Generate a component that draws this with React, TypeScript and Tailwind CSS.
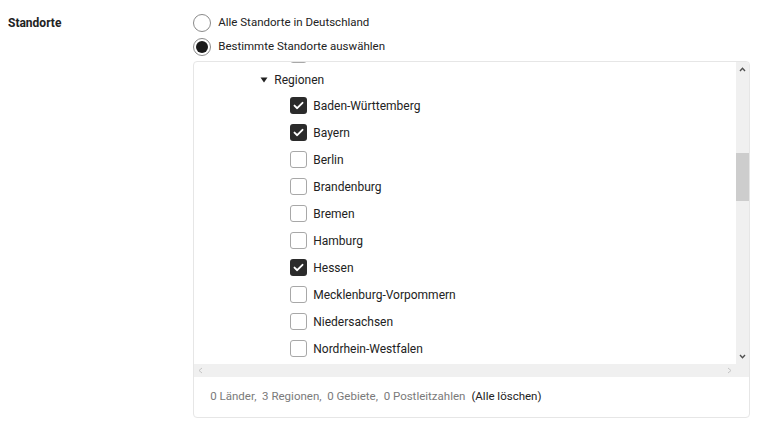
import { FC } from "react";

const regions = [
  { name: "Baden-Württemberg", checked: true },
  { name: "Bayern", checked: true },
  { name: "Berlin", checked: false },
  { name: "Brandenburg", checked: false },
  { name: "Bremen", checked: false },
  { name: "Hamburg", checked: false },
  { name: "Hessen", checked: true },
  { name: "Mecklenburg-Vorpommern", checked: false },
  { name: "Niedersachsen", checked: false },
  { name: "Nordrhein-Westfalen", checked: false },
];

const Checkbox: FC<{ checked: boolean }> = ({ checked }) =>
  checked ? (
    <span className="w-[17px] h-[17px] rounded-[3px] bg-[#2b2b2b] flex items-center justify-center shrink-0">
      <svg width="11" height="9" viewBox="0 0 11 9" fill="none">
        <path d="M1.5 4.6 L4.2 7.2 L9.5 1.8" stroke="#fff" strokeWidth="1.9" strokeLinecap="round" strokeLinejoin="round" />
      </svg>
    </span>
  ) : (
    <span className="w-[17px] h-[17px] rounded-[3px] border border-[#a8a8a8] bg-white shrink-0" />
  );

const Radio: FC<{ checked: boolean; label: string }> = ({ checked, label }) => (
  <label className="flex items-center gap-[7px] h-[24px]">
    {checked ? (
      <span className="w-[18px] h-[18px] rounded-full border border-[#8a8a8a] flex items-center justify-center">
        <span className="w-[12px] h-[12px] rounded-full bg-[#1a1a1a]" />
      </span>
    ) : (
      <span className="w-[18px] h-[18px] rounded-full border border-[#8a8a8a] bg-white" />
    )}
    <span className="text-[11.5px]">{label}</span>
  </label>
);

export default function App() {
  return (
    <div className="flex px-2 pt-[11px] bg-white text-[#222] text-[12px] font-['Roboto',sans-serif] min-h-[424px]">
      <div className="w-[186px] font-bold pt-[4px] leading-[16px]">Standorte</div>
      <div className="w-[559px] flex flex-col">
        <Radio checked={false} label="Alle Standorte in Deutschland" />
        <Radio checked label="Bestimmte Standorte auswählen" />
        <div className="mt-[2px] border border-[#e6e6e6] rounded-[4px] flex flex-col overflow-hidden">
          <div className="flex h-[315px]">
            <div className="flex-1 flex flex-col">
              <div className="flex-1 overflow-hidden">
                <div className="flex items-center h-[27px] -mt-[21px] pl-[96px]">
                  <Checkbox checked={false} />
                </div>
                <div className="flex items-center h-[24px] pl-[66px] gap-[6px]">
                  <svg width="8" height="6" viewBox="0 0 8 6">
                    <path d="M0.5 0.5 H7.5 L4 5.5 Z" fill="#222" />
                  </svg>
                  <span>Regionen</span>
                </div>
                {regions.map((region) => (
                  <div key={region.name} className="flex items-center h-[27px] pl-[96px] gap-[6px]">
                    <Checkbox checked={region.checked} />
                    <span>{region.name}</span>
                  </div>
                ))}
              </div>
              <div className="h-[13px] bg-[#f0f0f0] flex items-center justify-between px-[4px]">
                <svg width="5" height="7" viewBox="0 0 5 7">
                  <path d="M4 1 L1 3.5 L4 6" stroke="#c4c4c4" fill="none" strokeWidth="1" />
                </svg>
                <svg width="5" height="7" viewBox="0 0 5 7">
                  <path d="M1 1 L4 3.5 L1 6" stroke="#c4c4c4" fill="none" strokeWidth="1" />
                </svg>
              </div>
            </div>
            <div className="w-[13px] bg-[#f0f0f0] flex flex-col items-center">
              <div className="h-[14px] flex items-center justify-center">
                <svg width="7" height="5" viewBox="0 0 7 5">
                  <path d="M1 4 L3.5 1.3 L6 4" stroke="#505050" fill="none" strokeWidth="1.4" />
                </svg>
              </div>
              <div className="h-[77px]" />
              <div className="w-full h-[48px] bg-[#cdcdcd]" />
              <div className="flex-1" />
              <div className="h-[14px] flex items-center justify-center mb-[14px]">
                <svg width="7" height="5" viewBox="0 0 7 5">
                  <path d="M1 1 L3.5 3.7 L6 1" stroke="#505050" fill="none" strokeWidth="1.4" />
                </svg>
              </div>
            </div>
          </div>
          <div className="h-[40px] flex items-center pl-[16px] gap-[6px] text-[11.5px]">
            <span className="text-[#7a7a7a] whitespace-pre">0 Länder,  3 Regionen,  0 Gebiete,  0 Postleitzahlen</span>
            <span className="text-[#222]">(Alle löschen)</span>
          </div>
        </div>
      </div>
    </div>
  );
}
